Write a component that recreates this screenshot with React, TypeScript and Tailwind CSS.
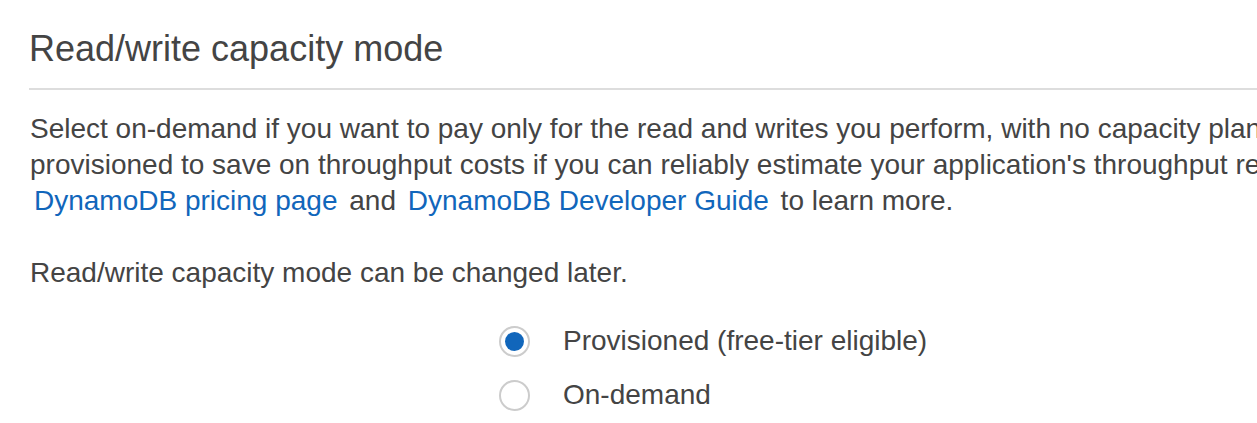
import React from "react";

// ─── Radio option ──────────────────────────────────────────────────────────

function RadioOption({ label, checked }: { label: string; checked?: boolean }) {
    return (
        <label className="flex items-center h-[54px] cursor-pointer">
            <span className="flex items-center justify-center w-[31px] h-[31px] rounded-full border-2 border-[#cccccc] bg-white">
                {checked && <span className="block w-[19px] h-[19px] rounded-full bg-[#1166bb]" />}
            </span>
            <span className="ml-[33px] text-[28px] leading-[36px] text-[#444444]">{label}</span>
        </label>
    );
}

export default function App() {
    return (
        <div
            className="w-full h-[423px] overflow-hidden bg-white"
            style={{ fontFamily: '"Liberation Sans", Arial, sans-serif' }}
        >
            <div className="w-[1600px] pl-[30px] pt-[31px]">
                <h2 className="text-[36px] leading-[36px] font-normal text-[#444444] pb-[21px] border-b-2 border-[#dddddd] -ml-px">
                    Read/write capacity mode
                </h2>

                <p className="mt-[21px] text-[28px] leading-[36px] text-[#444444] whitespace-nowrap">
                    Select on-demand if you want to pay only for the read and writes you perform, with no capacity planning required. Select
                    <br />
                    provisioned to save on throughput costs if you can reliably estimate your application's throughput requirements. See the
                    <br />
                    <a href="#" className="px-1 text-[#1166bb]">DynamoDB pricing page</a> and{" "}
                    <a href="#" className="px-1 text-[#1166bb]">DynamoDB Developer Guide</a> to learn more.
                </p>

                <p className="mt-[36px] text-[28px] leading-[36px] text-[#444444]">
                    Read/write capacity mode can be changed later.
                </p>

                <div className="ml-[469px] mt-[23px] flex flex-col">
                    <RadioOption label="Provisioned (free-tier eligible)" checked />
                    <RadioOption label="On-demand" />
                </div>
            </div>
        </div>
    );
}
